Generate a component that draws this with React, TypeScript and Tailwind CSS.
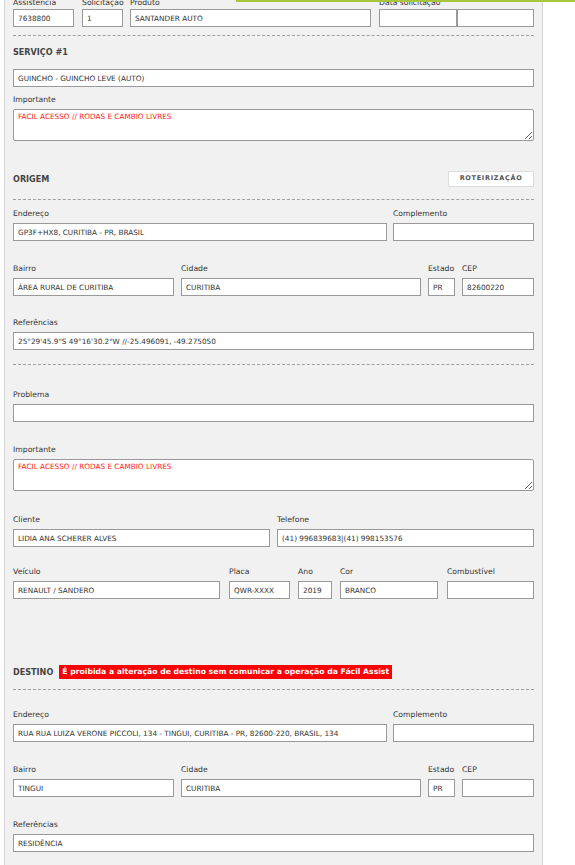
import type { ReactNode } from 'react';

function Label({ children, tight = false }: { children?: ReactNode; tight?: boolean }) {
  return (
    <div
      className={`h-[12px] whitespace-nowrap text-[7.7px] leading-[12px] text-[#333] ${tight ? 'mb-0' : 'mb-[3px]'}`}
    >
      {children}
    </div>
  );
}

function Box({ value = '', className = '' }: { value?: string; className?: string }) {
  return (
    <input
      readOnly
      value={value}
      className={`h-[18px] border border-[#999] bg-white px-[4px] text-[7.3px] text-[#333] outline-none ${className}`}
    />
  );
}

function Field({
  label,
  value,
  w,
  tight = false,
}: {
  label?: string;
  value?: string;
  w: string;
  tight?: boolean;
}) {
  return (
    <div className={`flex flex-col ${w}`}>
      <Label tight={tight}>{label}</Label>
      <Box value={value} className="w-full" />
    </div>
  );
}

function Note({ value }: { value: string }) {
  return (
    <div className="flex flex-col">
      <Label>Importante</Label>
      <textarea
        readOnly
        value={value}
        className="h-[32px] w-full rounded-[2px] border border-[#999] bg-white px-[4px] py-[2px] text-[7.3px] leading-[10px] text-[#ff1a1a] outline-none"
      />
    </div>
  );
}

function Dashed({ className = '' }: { className?: string }) {
  return <div className={`border-t border-dashed border-[#a0a0a0] ${className}`} />;
}

function Heading({ children }: { children: ReactNode }) {
  return <div className="text-[8.1px] font-bold leading-[12px] text-[#444]">{children}</div>;
}

export default function App() {
  return (
    <div className="relative min-h-screen overflow-hidden bg-white pl-[4px] font-['DejaVu_Sans',sans-serif]">
      <div className="absolute left-[236px] right-0 top-0 h-[2px] bg-[#a9c53c]" />
      <div className="flex min-h-[865px] w-[539px] flex-col border-x border-[#d5d5d5] bg-[#f1f1f1] px-[8px]">
        {/* cabeçalho */}
        <div className="-mt-[3px] flex">
          <Field label="Assistência" value="7638800" w="w-[61px]" tight />
          <Field label="Solicitação" value="1" w="ml-[8px] w-[41px]" tight />
          <Field label="Produto" value="SANTANDER AUTO" w="ml-[7px] w-[241px]" tight />
          <div className="ml-[8px] flex flex-col">
            <Label tight>Data solicitação</Label>
            <div className="flex">
              <Box className="w-[78px]" />
              <Box className="w-[77px]" />
            </div>
          </div>
        </div>

        <Dashed className="mt-[8px]" />

        {/* serviço */}
        <div className="mt-[10px]">
          <Heading>SERVIÇO #1</Heading>
        </div>
        <Box value="GUINCHO - GUINCHO LEVE (AUTO)" className="mt-[11px] w-full" />
        <div className="mt-[7px]">
          <Note value="FACIL ACESSO // RODAS E CAMBIO LIVRES" />
        </div>

        {/* origem */}
        <div className="mt-[30px] flex h-[16px] items-center justify-between">
          <Heading>ORIGEM</Heading>
          <button className="flex h-[16px] w-[86px] items-center justify-center border border-[#dcdcdc] bg-white text-[6.5px] font-bold tracking-[0.7px] text-[#555]">
            ROTEIRIZAÇÃO
          </button>
        </div>
        <Dashed className="mt-[12px]" />

        <div className="mt-[8px] flex">
          <Field label="Endereço" value="GP3F+HX8, CURITIBA - PR, BRASIL" w="w-[374px]" />
          <Field label="Complemento" w="ml-[6px] w-[141px]" />
        </div>
        <div className="mt-[22px] flex">
          <Field label="Bairro" value="ÁREA RURAL DE CURITIBA" w="w-[161px]" />
          <Field label="Cidade" value="CURITIBA" w="ml-[7px] w-[240px]" />
          <Field label="Estado" value="PR" w="ml-[7px] w-[27px]" />
          <Field label="CEP" value="82600220" w="ml-[7px] w-[72px]" />
        </div>
        <div className="mt-[21px]">
          <Field label="Referências" value={'25°29\'45.9"S 49°16\'30.2"W //-25.496091, -49.275050'} w="w-full" />
        </div>

        <Dashed className="mt-[14px]" />

        {/* problema / cliente / veículo */}
        <div className="mt-[24px]">
          <Field label="Problema" w="w-full" />
        </div>
        <div className="mt-[22px]">
          <Note value="FACIL ACESSO // RODAS E CAMBIO LIVRES" />
        </div>
        <div className="mt-[23px] flex">
          <Field label="Cliente" value="LIDIA ANA SCHERER ALVES" w="w-[257px]" />
          <Field label="Telefone" value="(41) 996839683|(41) 998153576" w="ml-[7px] w-[257px]" />
        </div>
        <div className="mt-[19px] flex">
          <Field label="Veículo" value="RENAULT / SANDERO" w="w-[207px]" />
          <Field label="Placa" value="QWR-XXXX" w="ml-[9px] w-[61px]" />
          <Field label="Ano" value="2019" w="ml-[8px] w-[34px]" />
          <Field label="Cor" value="BRANCO" w="ml-[8px] w-[98px]" />
          <Field label="Combustível" w="ml-[9px] w-[87px]" />
        </div>

        {/* destino */}
        <div className="mt-[66px] flex h-[14px] items-center">
          <Heading>DESTINO</Heading>
          <span className="ml-[6px] flex h-[14px] items-center bg-[#ff0000] px-[3px] text-[7.7px] font-bold text-white">
            É proibida a alteração de destino sem comunicar a operação da Fácil Assist
          </span>
        </div>
        <Dashed className="mt-[10px]" />

        <div className="mt-[19px] flex">
          <Field
            label="Endereço"
            value="RUA RUA LUIZA VERONE PICCOLI, 134 - TINGUI, CURITIBA - PR, 82600-220, BRASIL, 134"
            w="w-[374px]"
          />
          <Field label="Complemento" w="ml-[6px] w-[141px]" />
        </div>
        <div className="mt-[22px] flex">
          <Field label="Bairro" value="TINGUI" w="w-[161px]" />
          <Field label="Cidade" value="CURITIBA" w="ml-[7px] w-[240px]" />
          <Field label="Estado" value="PR" w="ml-[7px] w-[27px]" />
          <Field label="CEP" w="ml-[7px] w-[72px]" />
        </div>
        <div className="mt-[22px]">
          <Field label="Referências" value="RESIDÊNCIA" w="w-full" />
        </div>
      </div>
    </div>
  );
}
